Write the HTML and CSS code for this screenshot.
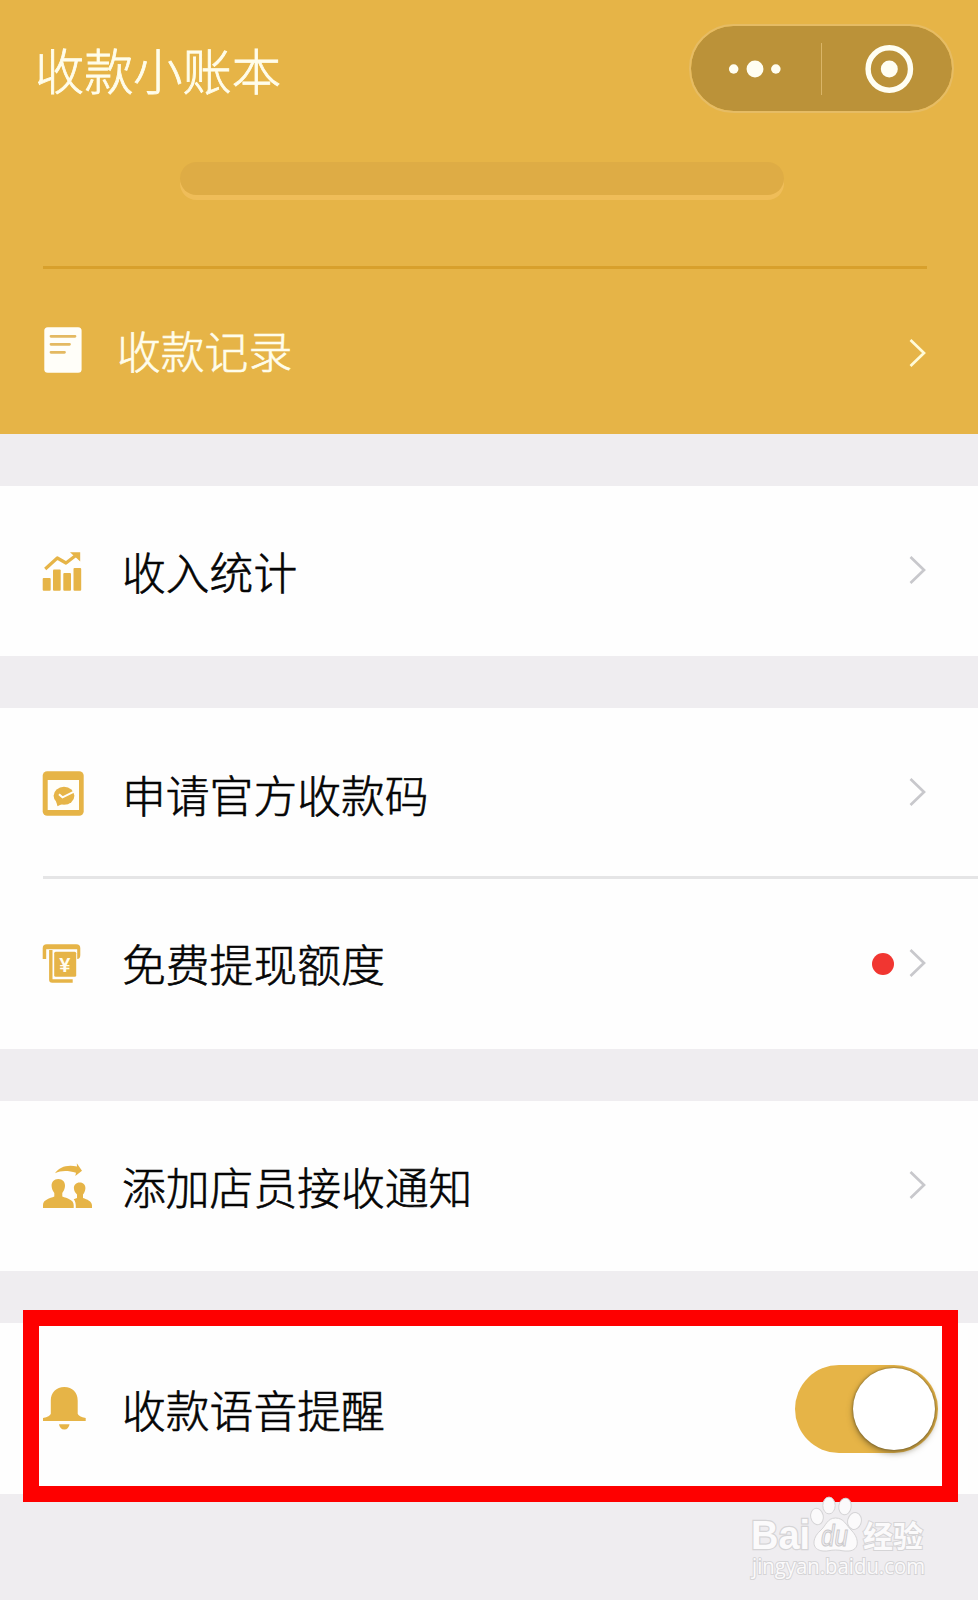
FILE: index.html
```html
<!DOCTYPE html>
<html lang="zh-CN">
<head>
<meta charset="utf-8">
<title>收款小账本</title>
<link rel="stylesheet" href="styles.css">
</head>
<body>
<main class="screen">
  <header class="hero">
    <div class="navbar">
      <h1 class="title">收款小账本</h1>
      <div class="capsule">
        <svg class="capsule-part" width="131" height="86" viewBox="0 0 131 86"><g fill="#fffef2"><circle cx="43" cy="43" r="4.8"/><circle cx="64.5" cy="43" r="8.5"/><circle cx="85.5" cy="43" r="4.8"/></g></svg>
        <span class="capsule-line"></span>
        <svg class="capsule-part" width="130" height="86" viewBox="0 0 130 86"><circle cx="67.3" cy="43" r="21.2" fill="none" stroke="#fffef2" stroke-width="5.4"/><circle cx="67.3" cy="43" r="8.5" fill="#fffef2"/></svg>
      </div>
    </div>
    <div class="slot"></div>
    <div class="hero-line"></div>
    <div class="row row-hero">
      <svg class="icon" viewBox="0 0 60 60"><rect x="2.3" y="7.3" width="37.3" height="45.5" rx="3.5" fill="#fffef9"/><path d="M9 16.3H33M9 24.3H27.5M9 32.3H22.5" stroke="#e4b962" stroke-width="2.8" stroke-linecap="round"/></svg>
      <span class="label">收款记录</span>
      <svg class="chevron" viewBox="0 0 18 30"><path d="M1.5 2L15 15L1.5 28"/></svg>
    </div>
  </header>

  <section class="group">
    <div class="row">
      <svg class="icon" viewBox="0 0 60 60"><g fill="#e6b447"><rect x=".7" y="37" width="8" height="12.7" rx="1"/><rect x="11" y="28.5" width="7.7" height="21.2" rx="1"/><rect x="21.3" y="32" width="7.7" height="17.7" rx="1"/><rect x="31.5" y="27" width="7.7" height="22.7" rx="1"/><path d="M28 11.3H38.2V20.5L35 17.5L31 14Z"/></g><path d="M3.2 28L15.3 17L24 22L35 13.5" fill="none" stroke="#e6b447" stroke-width="3.2" stroke-linejoin="round"/></svg>
      <span class="label">收入统计</span>
      <svg class="chevron" viewBox="0 0 18 30"><path d="M1.5 2L15 15L1.5 28"/></svg>
    </div>
  </section>

  <section class="group">
    <div class="row row-code">
      <svg class="icon" viewBox="0 0 60 60"><rect x=".7" y="9.3" width="41" height="44.4" rx="4.5" fill="#e6b447"/><rect x="5.7" y="18" width="31.3" height="30" fill="#fffefa"/><ellipse cx="22" cy="33.8" rx="10.4" ry="9" fill="#e6b447"/><path d="M14 39L15.5 44.2L22 41Z" fill="#e6b447"/><path d="M17 32.3L20.5 35.3L32 29.7" fill="none" stroke="#fffefa" stroke-width="2"/></svg>
      <span class="label">申请官方收款码</span>
      <svg class="chevron" viewBox="0 0 18 30"><path d="M1.5 2L15 15L1.5 28"/></svg>
    </div>
    <div class="row row-quota">
      <svg class="icon" viewBox="0 0 60 60"><path d="M.7 25V14.3Q.7 10.3 4.7 10.3H34.3Q38.3 10.3 38.3 14.3V21Q38.3 25 35.2 25V15.3H4.2V25Z" fill="#e6b447"/><path d="M8.8 16V45.7Q8.8 47 10.2 47H30.7" fill="none" stroke="#e6b447" stroke-width="3.4"/><rect x="12.2" y="17.7" width="22" height="25" rx="1.5" fill="#e6b447"/><text class="yen" x="22.7" y="38.2">¥</text></svg>
      <span class="label">免费提现额度</span>
      <span class="dot"></span>
      <svg class="chevron" viewBox="0 0 18 30"><path d="M1.5 2L15 15L1.5 28"/></svg>
    </div>
  </section>

  <section class="group">
    <div class="row row-staff">
      <svg class="icon" viewBox="0 0 60 60"><g fill="#e6b447"><path d="M16.3 23C20.7 23 23.2 26 23 30C22.9 33 21.5 35.3 20.3 37V40.5C25 42.4 31.7 43.5 31.7 49V52H1V49C1 43.5 8 42.4 12.3 40.5V37C11 35.3 9.7 33 9.6 30C9.4 26 12 23 16.3 23Z"/><path d="M37.7 26.5C41.5 26.5 43.5 29 43.4 32.2C43.3 35.3 42 37.2 41 38.5V42C45 43.5 50 45 50 49.5V52H33.8C34 47.5 33.3 45 31.7 43.2L35 42V38.5C33.6 37 32 35.3 31.9 32.2C31.8 29 34 26.5 37.7 26.5Z"/><path d="M13 17.3C17.5 11 25 8.3 35 10.5L34.8 7.3L40 14.8L33.3 20L34 16.8C26 14.2 19 14.2 13 17.3Z"/></g></svg>
      <span class="label">添加店员接收通知</span>
      <svg class="chevron" viewBox="0 0 18 30"><path d="M1.5 2L15 15L1.5 28"/></svg>
    </div>
  </section>

  <section class="group">
    <div class="row row-voice">
      <svg class="icon" viewBox="0 0 60 60"><g fill="#e6b447"><path d="M22.3 8C30.5 8 35.7 13.5 35.7 21.5V34.8Q36.5 37.5 43.7 39V42H1V39Q8 37.5 8.8 34.8V21.5C8.8 13.5 14.3 8 22.3 8Z"/><path d="M17 45.2H27.5Q26.8 50.3 22.3 50.5Q17.7 50.3 17 45.2Z"/></g></svg>
      <span class="label">收款语音提醒</span>
      <span class="switch"><span class="knob"></span></span>
      <div class="highlight"></div>
    </div>
  </section>

  <svg class="watermark" width="200" height="110" viewBox="0 0 200 110">
    <g fill="#fbfafb" stroke="#d5d4d6" stroke-width="1">
      <text class="wm-latin" x="5" y="59" textLength="59" lengthAdjust="spacingAndGlyphs">Bai</text>
      <ellipse cx="71" cy="26.5" rx="6.3" ry="8.3" transform="rotate(-12 71 26.5)"/>
      <ellipse cx="83" cy="15.5" rx="6.2" ry="8.4"/>
      <ellipse cx="99" cy="16.5" rx="6.2" ry="8.4" transform="rotate(8 99 16.5)"/>
      <ellipse cx="108.5" cy="31" rx="6.8" ry="8.5" transform="rotate(15 108.5 31)"/>
      <path d="M89.5 28C98 28 100 35 106 41C113 48 114 60 103 61C97 61.5 95 60 89.5 60C84 60 82 61.5 77 61C65 60 66 48 74 41C80 36 81 28 89.5 28Z"/>
      <text class="wm-du" x="75" y="55.5" textLength="27" lengthAdjust="spacingAndGlyphs">du</text>
      <text class="wm-cjk" x="117" y="57">经验</text>
      <text class="wm-url" x="6" y="84" textLength="173" lengthAdjust="spacingAndGlyphs">jingyan.baidu.com</text>
    </g>
  </svg>
</main>
</body>
</html>
```
FILE: styles.css
```css
* { box-sizing: border-box; }
body {
  margin: 0;
  background: #efedf0;
  font-family: "Noto Sans CJK SC", sans-serif;
  font-weight: 300;
}
.screen {
  position: relative;
  width: 978px;
  height: 1600px;
  overflow: hidden;
  background: #efedf0;
}
.hero {
  height: 434px;
  padding-top: 24px;
  background: #e6b447;
  color: #fffdeb;
}
.navbar {
  display: flex;
  align-items: center;
  justify-content: space-between;
  height: 89px;
  padding: 0 24px 0 35px;
}
.title {
  margin: 0;
  font-size: 49.2px;
  font-weight: 300;
  line-height: 72px;
  -webkit-text-stroke: .8px currentColor;
}
.capsule {
  display: flex;
  align-items: center;
  width: 265px;
  height: 89px;
  border: 2px solid #e6bc64;
  border-radius: 45px;
  background: #bb9239;
  background-clip: padding-box;
}
.capsule-part { display: block; flex: 1; min-width: 0; }
.capsule-line { width: 1px; height: 52px; background: #dab567; }
.slot {
  width: 604px;
  height: 33px;
  margin: 49px 0 0 180px;
  border-radius: 17px;
  background: #deac45;
  box-shadow: 0 5px 0 #efbd59;
}
.hero-line {
  height: 3px;
  margin: 71px 51px 0 43px;
  background: #d8a02c;
}
.row {
  position: relative;
  display: flex;
  align-items: center;
  height: 170px;
  padding: 0 51px 0 42px;
}
.row-hero { height: 166px; }
.icon { flex: none; width: 60px; height: 60px; }
.label {
  flex: 1;
  margin-left: 20px;
  font-size: 43.8px;
  line-height: 64px;
  white-space: nowrap;
  -webkit-text-stroke: .6px currentColor;
}
.row-hero .icon { margin-top: -4px; }
.row-hero .label { margin: -5px 0 0 15px; }
.chevron {
  flex: none;
  width: 18px;
  height: 30px;
  margin-top: -2px;
  fill: none;
  stroke: #c8c8cc;
  stroke-width: 2.7;
}
.row-hero .chevron { margin-top: 1px; stroke: #fffbd9; }
.group {
  margin-top: 52px;
  background: #fefefe;
  color: #050505;
}
.row-code { height: 168px; }
.row-code .label { padding-top: 3px; }
.row-code .chevron,
.row-quota .chevron { margin-top: 0; }
.row-quota { height: 173px; }
.row-quota .icon { margin-top: 3px; }
.row-quota::before {
  content: "";
  position: absolute;
  top: 0;
  left: 43px;
  right: 0;
  height: 3px;
  background: #e5e5e6;
}
.yen {
  fill: #fffdf0;
  font: bold 20px "Liberation Sans", sans-serif;
  text-anchor: middle;
}
.dot {
  width: 22px;
  height: 22px;
  margin: 2px 15px 0 0;
  border-radius: 50%;
  background: #f13631;
}
.row-voice { height: 171px; padding-right: 40px; }
.switch {
  display: flex;
  justify-content: flex-end;
  width: 143px;
  height: 88px;
  padding: 3px;
  border-radius: 44px;
  background: #e6b447;
}
.knob {
  width: 82px;
  height: 82px;
  border-radius: 50%;
  background: #fff;
  box-shadow: 0 3px 6px rgba(70, 60, 30, .5), 0 0 3px rgba(70, 60, 30, .7);
}
.highlight {
  position: absolute;
  top: -13px;
  left: 23px;
  width: 935px;
  height: 192px;
  border: 16px solid #fe0000;
}
.watermark {
  position: absolute;
  left: 746px;
  top: 1490px;
}
.wm-latin { font: bold 40px "Liberation Sans", sans-serif; paint-order: stroke; stroke-width: 2.5px; }
.wm-du { font: italic 30px "Liberation Sans", sans-serif; fill: #efedf0; stroke: #c9c8ca; }
.wm-cjk { font: bold 30px "Noto Sans CJK SC", sans-serif; paint-order: stroke; stroke-width: 2px; }
.wm-url { font: 22px "Open Sans", sans-serif; paint-order: stroke; stroke-width: 2px; }
```
